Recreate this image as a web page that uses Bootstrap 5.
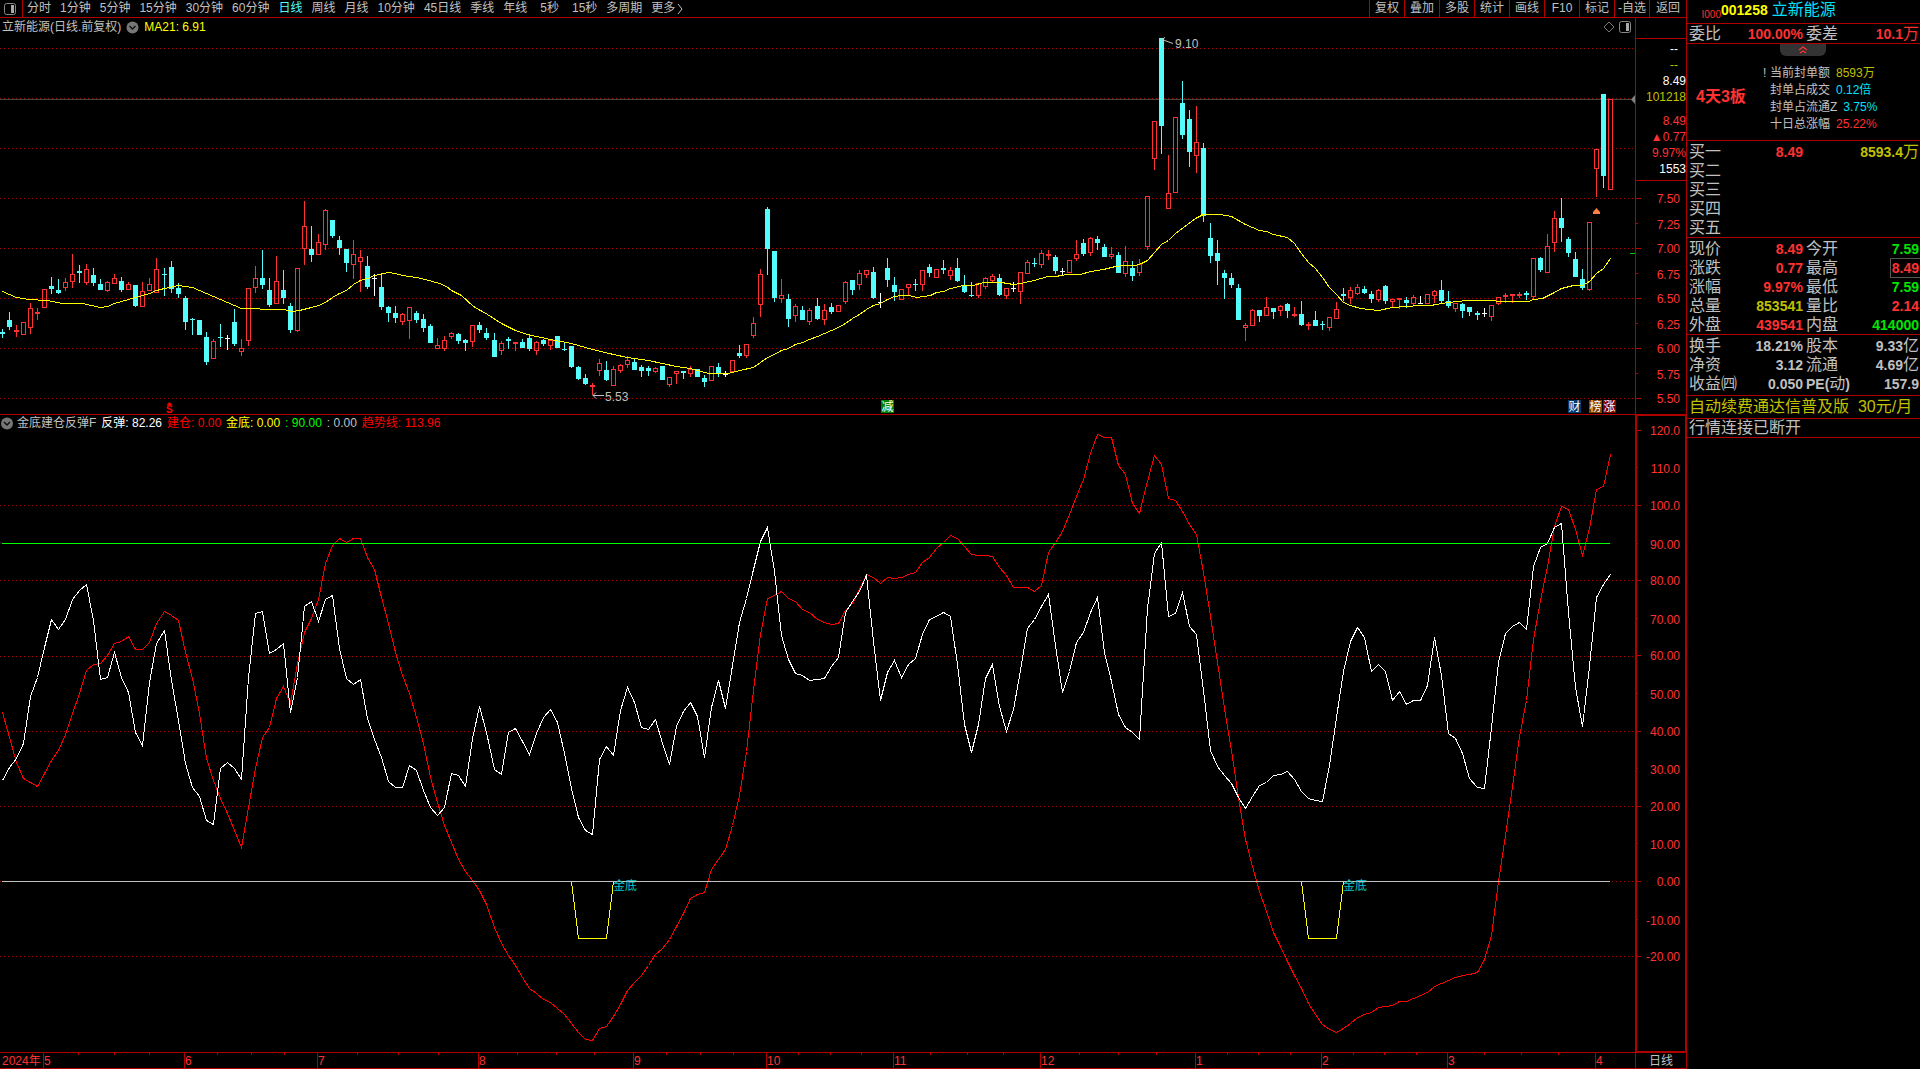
<!DOCTYPE html>
<html lang="zh-CN">
<head>
<meta charset="utf-8">
<meta name="viewport" content="width=device-width, initial-scale=1">
<title>立新能源 001258 日线</title>
<link href="https://cdn.jsdelivr.net/npm/bootstrap@5.3.0/dist/css/bootstrap.min.css" rel="stylesheet">
<style>
:root{--line:#b00000;--up:#ff3232;--dn:#54fcfc;--txt:#c0c0c0;--gold:#c0c000;--grn:#00e600;--cy:#00e1ff}
body{background:#000;color:var(--txt);font-family:"Liberation Sans","Noto Sans CJK SC",sans-serif;font-size:12px;line-height:16px}
button{background:none;border:0;padding:0;color:inherit;font:inherit;line-height:inherit}
svg{display:block}
svg text{font-size:12px}
.ln-b{border-bottom:1px solid var(--line)}
.ln-t{border-top:1px solid var(--line)}
.ln-l{border-left:1px solid var(--line)}
.ln-r{border-right:1px solid var(--line)}
.topbar{height:18px;line-height:15px}
.periods{gap:9px}
.layout-btn{width:23px;padding-left:4px;margin-right:-5px}
.wide-btn{padding:0 4px}
.tool{width:35px;height:17px;text-align:center}
.tool:last-child{width:37px}
.is-on{color:var(--dn)}
.c-up{color:var(--up)}.c-gold{color:var(--gold)}.c-grn{color:var(--grn)}.c-cy{color:var(--cy)}
.c-yel{color:#ff0}.c-red{color:#f00}.c-lime{color:#0f0}.c-wht{color:#fff}
.price-pane{height:397px}
.pane-title{height:18px;line-height:18px;padding-left:2px}
.pane-title button{margin:0 5px}
.ind-title{height:17px;line-height:17px;gap:5px;padding-left:1px}
.ind-title button{margin-right:-1px}
.scale{width:51px}
.quick{height:143px;padding-top:2px;text-align:right;line-height:16px}
.scale-head{height:20px}
.ind-scale{border:1px solid var(--line);border-left-width:2px}
.timeline{height:17px}
.months{min-width:0}
.side{width:234px}
.stock-head{height:23px;line-height:20px}
.stock-head .flag{font-size:10px;width:34px;text-align:right;padding-top:5px}
.stock-head strong{font-size:14px}
.name,.quotes,.notice{font-size:16px}
.quotes{width:100%;table-layout:fixed;border-collapse:separate;border-spacing:0;line-height:18px}
.quotes td,.quotes th{padding:0 1px 0 2px;height:19px;font-weight:400;white-space:nowrap;vertical-align:middle}
.quotes td{text-align:right}
.quotes b{font-size:14px;line-height:14px}
.w-a{width:50px}.w-b{width:67px}.w-c{width:45px}
.seal{height:97px}
.seal dl{line-height:17px;padding-top:14px}
.seal dt,.seal dd{font-weight:400;margin:0}
.seal dd{margin-left:6px}
.bang{width:9px;padding-left:2px}
.streak{width:74px;padding-left:9px;font-size:16px;font-weight:700;white-space:nowrap;padding-top:10px}
.fold{position:absolute;left:93px;top:0;width:46px;height:12px;background:#333;border-radius:0 0 6px 6px}
.boxed{outline:1px solid #555;outline-offset:1px}
.notice{line-height:18px;padding-left:2px;white-space:pre}
.notice-ad{line-height:22px}
</style>
<script src="https://cdn.jsdelivr.net/npm/bootstrap@5.3.0/dist/js/bootstrap.bundle.min.js"></script>
<style>
.q-pad{padding-top:1px}
.q-end{padding-bottom:2px}
</style>
</head>
<body class="vh-100 overflow-hidden">
<div class="d-flex h-100">
<main class="d-flex flex-column flex-grow-1 overflow-hidden">
  <header class="topbar d-flex justify-content-between ln-b">
    <nav class="periods d-flex text-nowrap" aria-label="周期">
      <button class="layout-btn ln-r" aria-label="布局"><svg width="13" height="12"><rect x=".5" y=".5" width="11" height="11" rx="2" fill="none" stroke="#888"/><rect x="7" y="2" width="3" height="8" fill="#aaa"/></svg></button>
      <button>分时</button><button>1分钟</button><button>5分钟</button><button>15分钟</button><button>30分钟</button><button>60分钟</button><button class="is-on">日线</button><button>周线</button><button>月线</button><button>10分钟</button><button>45日线</button><button>季线</button><button>年线</button><button class="wide-btn">5秒</button><button>15秒</button><button>多周期</button><button class="d-flex align-items-center">更多<svg width="10" height="14"><path d="M3 2l4 5-4 5" fill="none" stroke="#c0c0c0"/></svg></button>
    </nav>
    <div class="d-flex text-nowrap">
      <button class="tool ln-l">复权</button><button class="tool ln-l">叠加</button><button class="tool ln-l">多股</button><button class="tool ln-l">统计</button><button class="tool ln-l">画线</button><button class="tool ln-l">F10</button><button class="tool ln-l">标记</button><button class="tool ln-l">-自选</button><button class="tool ln-l">返回</button>
    </div>
  </header>

  <section class="price-pane d-flex ln-b">
    <div class="d-flex flex-column flex-grow-1 overflow-hidden">
      <div class="pane-title d-flex align-items-center">
        <span>立新能源(日线.前复权)</span>
        <button aria-label="展开"><svg width="13" height="13"><circle cx="6.5" cy="6.5" r="6" fill="#777"/><path d="M3.500 5l3 3 3-3" fill="none" stroke="#111" stroke-width="1.5"/></svg></button>
        <span class="c-yel">MA21: 6.91</span>
        <span class="ms-auto d-flex align-items-center gap-1 pe-1">
          <svg width="12" height="12"><path d="M6 1l5 5-5 5-5-5z" fill="none" stroke="#777"/></svg>
          <svg width="12" height="12"><rect x=".5" y=".5" width="11" height="11" rx="2" fill="none" stroke="#888"/><rect x="7" y="2" width="3" height="8" fill="#aaa"/></svg>
        </span>
      </div>
      <svg id="price" class="flex-grow-1 w-100" role="img" aria-label="日K线"></svg>
    </div>
    <div class="scale ln-l d-flex flex-column">
      <div class="scale-head"></div>
      <div class="quick ln-t ln-b">
        <div class="c-wht pe-2">--</div><div class="c-gold pe-2">--</div><div class="c-wht">8.49</div><div class="c-gold">101218</div>
        <div class="c-up pt-2">8.49</div><div class="c-up">▲0.77</div><div class="c-up">9.97%</div><div class="c-wht">1553</div>
      </div>
      <svg id="priceScale" class="flex-grow-1 w-100"></svg>
    </div>
  </section>

  <section class="d-flex flex-grow-1 overflow-hidden">
    <div class="d-flex flex-column flex-grow-1 overflow-hidden">
      <div class="ind-title d-flex align-items-center text-nowrap">
        <button aria-label="展开指标"><svg width="12" height="13"><circle cx="6" cy="6.5" r="6" fill="#777"/><path d="M3 5l3 3 3-3" fill="none" stroke="#111" stroke-width="1.5"/></svg></button>
        <span>金底建仓反弹F</span><span class="c-wht">反弹: 82.26</span><span class="c-red">建仓: 0.00</span><span class="c-yel">金底: 0.00</span><span class="c-lime">: 90.00</span><span>: 0.00</span><span class="c-red">趋势线: 113.96</span>
      </div>
      <svg id="ind" class="flex-grow-1 w-100" role="img" aria-label="金底建仓反弹指标"></svg>
    </div>
    <div class="scale ind-scale d-flex"><svg id="indScale" class="w-100 h-100"></svg></div>
  </section>

  <footer class="timeline d-flex ln-t ln-b">
    <svg id="months" class="months flex-grow-1 h-100"></svg>
    <button class="scale ln-l">日线</button>
  </footer>
</main>

<aside class="side ln-l flex-shrink-0">
  <div class="stock-head d-flex">
    <span class="flag c-up">I000</span><strong class="c-yel">001258</strong><span class="name c-cy ms-1">立新能源</span>
  </div>
  <table class="quotes ln-t"><colgroup><col class="w-a"><col class="w-b"><col class="w-c"><col></colgroup>
    <tr><th>委比</th><td class="c-up"><b>100.00%</b></td><th>委差</th><td class="c-up"><b>10.1</b>万</td></tr>
  </table>
  <div class="seal ln-t position-relative d-flex align-items-center">
    <button class="fold" aria-label="收起"><svg width="46" height="11"><path d="M19 5l4-3 4 3M20 8l3-2 3 2" fill="none" stroke="#ff3232" stroke-width="1.2"/></svg></button>
    <div class="streak c-up">4天3板</div>
    <dl class="mb-0">
      <div class="d-flex"><span class="bang">!</span><dt>当前封单额</dt><dd class="c-gold">8593万</dd></div>
      <div class="d-flex"><span class="bang"></span><dt>封单占成交</dt><dd class="c-cy">0.12倍</dd></div>
      <div class="d-flex"><span class="bang"></span><dt>封单占流通Z</dt><dd class="c-cy">3.75%</dd></div>
      <div class="d-flex"><span class="bang"></span><dt>十日总涨幅</dt><dd class="c-up">25.22%</dd></div>
    </dl>
  </div>
  <table class="quotes q-pad ln-t"><colgroup><col class="w-a"><col class="w-b"><col class="w-c"><col></colgroup>
    <tr><th>买一</th><td class="c-up"><b>8.49</b></td><th></th><td class="c-gold"><b>8593.4</b>万</td></tr>
    <tr><th>买二</th><td></td><th></th><td></td></tr>
    <tr><th>买三</th><td></td><th></th><td></td></tr>
    <tr><th>买四</th><td></td><th></th><td></td></tr>
    <tr><th>买五</th><td></td><th></th><td></td></tr>
  </table>
  <table class="quotes q-pad ln-t"><colgroup><col class="w-a"><col class="w-b"><col class="w-c"><col></colgroup>
    <tr><th>现价</th><td class="c-up"><b>8.49</b></td><th>今开</th><td class="c-grn"><b>7.59</b></td></tr>
    <tr><th>涨跌</th><td class="c-up"><b>0.77</b></td><th>最高</th><td class="c-up"><b class="boxed">8.49</b></td></tr>
    <tr><th>涨幅</th><td class="c-up"><b>9.97%</b></td><th>最低</th><td class="c-grn"><b>7.59</b></td></tr>
    <tr><th>总量</th><td class="c-gold"><b>853541</b></td><th>量比</th><td class="c-up"><b>2.14</b></td></tr>
    <tr><th>外盘</th><td class="c-up"><b>439541</b></td><th>内盘</th><td class="c-grn"><b>414000</b></td></tr>
  </table>
  <table class="quotes q-pad q-end ln-t"><colgroup><col class="w-a"><col class="w-b"><col class="w-c"><col></colgroup>
    <tr><th>换手</th><td><b>18.21%</b></td><th>股本</th><td><b>9.33</b>亿</td></tr>
    <tr><th>净资</th><td><b>3.12</b></td><th>流通</th><td><b>4.69</b>亿</td></tr>
    <tr><th>收益㈣</th><td><b>0.050</b></td><th><b>PE(</b>动<b>)</b></th><td><b>157.9</b></td></tr>
  </table>
  <div class="notice notice-ad ln-t c-gold">自动续费通达信普及版  30元/月</div>
  <div class="notice ln-t ln-b">行情连接已断开</div>
</aside>
</div>

<script>
// Daily bars: colour key, high, body top, body bottom, low, in cents
const bars=`c619,616,615,611 c636,628,622,619 r623,618,617,612 r626,626,614,614 r645,640,621,615 r640,636,635,629 r659,659,641,641 c671,662,660,655 c669,658,656,655 r670,666,661,658
r694,674,667,661 c683,677,676,666 r684,679,666,664 c680,673,666,663 c669,664,659,659 r667,666,658,657 r674,670,665,665 c671,667,659,657 r666,664,659,659 c663,663,643,642
r666,657,642,642 r670,664,658,658 r690,679,656,656 c680,674,674,653 c687,681,660,656 c665,660,655,651 c652,650,627,619 c630,629,629,614 c628,628,614,614 c616,611,587,584
r609,607,590,590 c624,611,611,602 w613,610,610,599 c639,626,605,603 r609,600,597,593 r660,660,608,603 r682,670,661,656 c698,670,664,660 c670,658,644,642 r692,667,645,645
c678,658,651,645 c645,642,619,616 r680,680,618,617 r747,722,700,684 c722,699,694,687 r714,706,694,694 r739,738,704,699 c728,728,713,711 c712,708,701,694 c699,699,686,677
r708,694,684,670 r698,691,687,657 c692,682,662,660 w674,670,670,653 c674,661,642,639 c642,641,636,627 c642,635,631,626 r635,634,627,624 r641,641,628,610 c637,635,629,626
c634,629,621,617 c624,622,606,606 r610,603,600,600 r612,608,600,598 r616,615,612,610 c615,614,608,605 c609,608,606,598 r623,623,607,602 c626,623,619,616 c620,615,611,609
c615,608,592,592 r607,605,598,594 c611,609,608,600 r606,606,605,598 c609,606,601,601 c613,610,600,598 r607,606,598,594 c609,608,605,603 r609,608,603,599 c612,612,601,601
c605,599,599,598 c602,602,582,581 c582,581,570,569 c574,570,565,564 r565,563,562,554 r589,585,578,573 c587,578,569,568 r582,579,563,563 r584,583,578,576 r592,588,584,581
c589,586,579,579 c583,581,578,572 c582,580,578,573 r581,580,577,576 c582,582,569,569 r571,571,564,562 r577,577,575,565 c577,577,576,570 r582,579,575,572 c579,579,572,572
c573,570,567,562 r582,582,568,568 c585,581,575,572 w577,574,574,572 r588,588,577,577 c603,595,593,591 r604,604,593,591 r631,625,613,611 r679,674,644,632 c741,739,700,674
c697,697,651,647 r669,653,650,646 c654,649,630,622 r644,642,633,627 c642,638,629,629 r640,638,627,624 c650,642,630,629 r644,638,629,624 c645,641,637,635 r643,643,637,637
r667,666,647,645 c668,668,659,654 r678,675,664,659 r678,678,674,671 c681,676,651,650 w655,646,646,641 c690,680,669,662 c671,663,657,648 r659,659,649,649 r664,664,661,653
c669,664,664,658 r678,678,664,658 c684,681,676,672 r679,679,671,671 c688,680,679,675 r681,678,673,669 c690,680,668,667 c673,663,657,656 c666,653,653,652 r665,665,653,651
r671,670,662,660 r674,672,668,667 c674,670,654,653 r660,660,653,650 w666,660,660,657 r676,676,657,645 r688,686,675,675 c690,685,685,682 r698,695,684,681 r698,694,693,689
c693,691,678,675 w680,677,677,674 r688,688,676,676 r708,694,690,688 c709,705,695,693 r711,710,696,693 c712,709,706,699 c704,701,692,692 r701,694,692,690 c696,693,676,676
r702,687,675,672 c687,680,673,668 r689,684,676,673 r752,752,702,699 r827,827,790,779 c910,910,823,795 r793,755,740,740 r831,831,756,756 c867,845,814,810 c838,829,797,782
r842,806,793,776 c805,800,733,727 c725,710,693,686 c708,695,688,664 c678,675,671,650 c675,670,664,661 c664,660,629,629 r625,623,621,608 r639,638,623,623 c638,638,633,627
r651,641,633,633 c640,640,637,630 r643,642,638,633 c645,644,638,631 r641,634,633,632 c647,634,624,623 r626,624,623,619 c637,628,623,623 c627,624,624,619 r631,631,621,618
r646,639,630,630 c660,654,653,648 r661,658,651,645 r664,661,655,654 c662,659,656,655 c657,654,650,646 r659,658,649,647 c663,662,648,645 r649,649,647,642 r650,650,649,640
c651,648,646,641 r653,651,645,644 w652,645,645,645 r654,654,645,645 r658,657,653,646 c668,658,648,646 c657,647,643,641 r645,645,640,637 c645,644,638,631 c641,641,637,633
c637,635,634,629 w640,635,635,632 r643,643,632,628 r651,651,645,644 r655,653,652,646 r654,654,653,646 r656,654,653,651 c657,655,654,649 r690,690,652,650 c691,690,679,677
r714,702,676,676 r737,730,706,697 c750,730,721,707 c711,709,696,692 c696,689,672,672 c679,669,661,659 r726,726,659,658 r799,799,780,752 c854,854,773,761 r849,849,759,759`.split(/\s+/);
const ma='2,291 9,294 16,297 28,299 47,300 62,303 82,303 100,307 107,306 114,303 121,301 135,297 149,293 156,290 164,288 178,285 192,287 206,293 220,299 234,305 241,308 257,308 262,309 283,309 292,311 299,310 311,307 318,305 325,302 332,297 339,293 346,290 353,284 360,280 367,278 374,275 388,272 395,273 402,275 416,277 425,279 439,283 446,286 451,290 461,295 473,306 487,314 501,323 515,330 527,334 550,339 571,343 592,349 613,354 627,357 648,360 676,366 690,368 708,373 728,373 739,370 753,367 760,362 767,357 774,354 781,350 788,348 795,344 802,342 809,339 817,336 824,333 831,330 838,327 845,323 852,318 859,314 866,309 873,305 880,303 887,299 894,296 901,295 909,295 916,297 930,295 936,292 943,291 950,288 963,285 973,285 983,282 1001,282 1013,284 1020,283 1034,280 1047,276 1055,276 1067,274 1080,274 1090,271 1103,269 1115,266 1125,265 1135,265 1141,263 1147,260 1154,252 1161,244 1168,240 1175,233 1187,224 1195,218 1203,214 1220,214 1231,216 1245,224 1259,230 1266,231 1273,234 1287,237 1294,243 1301,253 1308,262 1315,268 1322,277 1329,287 1336,294 1343,302 1350,305 1360,308 1378,310 1392,307 1406,306 1420,305 1430,305 1448,302 1466,300 1493,300 1498,301 1528,301 1533,299 1542,298 1554,292 1561,288 1573,285 1582,285 1589,281 1596,273 1603,268 1610,258';
const rebound=[780,767,758,743,696,677,647,619,629,619,599,590,584,620,679,677,652,677,692,732,745,682,643,630,680,720,763,787,796,820,824,768,762,768,779,677,613,611,653,649,643,712,677,606,601,621,599,595,648,678,684,679,718,739,757,781,787,787,765,770,790,807,815,807,773,775,786,738,706,732,769,774,732,728,741,754,733,717,709,722,753,788,817,830,834,759,746,755,710,687,702,727,729,719,743,764,726,711,702,716,757,707,680,708,665,622,598,569,541,527,571,635,659,673,675,680,679,678,666,657,612,601,591,575,641,700,672,660,677,664,658,634,619,616,612,616,664,724,752,724,678,664,706,731,709,670,628,619,606,594,645,692,671,642,632,612,597,652,681,714,727,732,739,608,553,542,616,613,592,626,634,690,750,766,775,783,797,808,796,785,782,775,774,771,779,791,798,800,801,765,717,671,641,627,637,671,664,671,700,691,704,700,700,685,637,675,733,738,753,778,787,788,727,662,633,626,622,629,566,547,543,527,523,612,687,726,666,597,584,574];
const trend=[712,737,762,778,782,786,773,760,750,734,713,693,670,664,663,655,643,641,636,649,649,642,623,611,615,620,652,678,713,758,780,798,813,830,847,807,768,737,727,698,686,703,663,632,618,599,563,545,538,542,538,538,557,569,597,623,652,675,693,717,743,777,802,825,842,859,871,880,890,904,927,943,955,965,977,988,993,999,1002,1008,1014,1023,1032,1039,1040,1028,1026,1016,1004,990,982,975,965,954,948,939,926,913,898,894,892,869,859,849,825,795,751,690,634,598,595,591,598,601,609,612,619,622,624,623,610,603,589,574,577,583,577,578,577,574,572,562,557,548,542,535,538,546,554,555,555,556,567,575,587,587,587,591,585,552,542,531,514,496,479,453,434,437,437,465,474,503,513,481,455,464,498,500,511,524,534,572,616,662,708,750,797,839,866,891,911,932,946,961,975,988,1003,1014,1024,1029,1032,1028,1023,1017,1014,1012,1007,1006,1005,1001,1001,998,995,992,986,983,980,977,975,974,972,959,935,881,835,786,736,700,639,600,566,526,506,509,529,555,528,489,486,454];
const RED='#ff3232',CY='#54fcfc',LN='#b00000';
const px=i=>2+7*i+Math.floor((i+24)/46.65);
const box=(x,y,w,h,c)=>`<rect x="${x}" y="${y}" width="${w}" height="${h}" fill="${c}"/>`;
const dots=y=>`<line x1="0" x2="100%" y1="${y+.5}" y2="${y+.5}" stroke="${LN}" stroke-dasharray="1 3"/>`;
const label=(x,y,t,c,a='start')=>`<text x="${x}" y="${y+4}" fill="${c}" text-anchor="${a}">${t}</text>`;
const line=(pts,c)=>`<polyline points="${pts}" fill="none" stroke="${c}" shape-rendering="crispEdges"/>`;
const put=(id,top,s)=>{document.getElementById(id).innerHTML=`<g transform="translate(0,${-top})">${s}</g>`};
const shift=s=>s.split(' ').map(p=>p.split(',').map(n=>+n+.5).join()).join(' ');

// price pane
let s='';
for(let y=48;y<400;y+=50)s+=dots(y);
s+=`<rect x="0" y="99" width="100%" height="1" fill="#444"/>`;
bars.forEach((b,i)=>{
  const k=b[0],[h,t,o,l]=b.slice(1).split(',').map(v=>948-v),x=px(i),c={r:RED,c:CY,w:'#fff'}[k];
  s+=box(x,h,1,t-h,c)+box(x,o+1,1,l-o,c);
  s+=k==='r'&&o-t>1?`<rect x="${x-1.5}" y="${t+.5}" width="4" height="${o-t}" fill="none" stroke="${c}"/>`:box(x-2,t,5,o-t+1,c);
});
s+=line(shift(ma),'#ff0');
s+=`<path d="M1173 43.5L1162 39.5M1165 37.5L1162 39.5L1164 43M604 395.5H593M596 392.5L593 395.5L596 398.5" fill="none" stroke="#c0c0c0"/>`;
s+=label(1175,44,'9.10','#c0c0c0')+label(605,397,'5.53','#c0c0c0');
[[881,'减','#008000'],[1568,'财','#003a70'],[1589,'榜','#804000'],[1603,'涨','#800000']].forEach(([x,t,c])=>s+=box(x,400,13,13,c)+`<text x="${x+.5}" y="411" fill="#fff">${t}</text>`);
s+=`<path d="M166.500 405L169.500 402L172.500 405z" fill="#f00"/><text x="166" y="413" fill="#f00" font-weight="700" style="font-size:10px">S</text>`;
s+=`<path d="M1593 214v-2l3.500-4 3.500 4v2z" fill="#ff8040"/>`+box(1630,253,5,1,'#00c800')+`<path d="M1635 95v9l-4-4.500z" fill="#808080"/>`;
put('price',36,s);

// price scale
s='';
for(let v=750,n=0;v>=550;v-=25,n++){const y=948-v;s+=box(0,y,n%2?2:5,1,LN)+label(44,y+(n%2?2:1),(v/100).toFixed(2),RED,'end')}
put('priceScale',181,s);

// indicator pane
s='';
[505,580,656,731,806,881,956].forEach(y=>s+=dots(y));
const yel='571,881 578,938 606,938 613,881',yel2='1301,881 1308,938 1336,938 1343,881';
s+=line(trend.map((y,i)=>px(i)+.5+','+(y+.5)).join(' '),'#f00')+line(rebound.map((y,i)=>px(i)+.5+','+(y+.5)).join(' '),'#fff');
s+=box(2,543,1608,1,'#0f0')+line(shift(yel),'#ff0')+line(shift(yel2),'#ff0')+box(2,881,1608,1,'#c0c0c0');
s+=label(613,886,'金底','#00c8c8')+label(1343,886,'金底','#00c8c8');
put('ind',432,s);

// indicator scale
s='';
for(let v=120;v>=-20;v-=10){const odd=(v/10)%2,y=Math.round(881-v*3.76);s+=box(0,y,odd?1:4,1,LN)+label(43,y+(odd?2:1),v>=100?v.toFixed(1):v.toFixed(2),RED,'end')}
put('indScale',416,s);

// month axis
s='';
[[43,5],[184,6],[317,7],[478,8],[633,9],[766,10],[893,11],[1040,12],[1195,1],[1321,2],[1447,3],[1595,4]].forEach(([x,m])=>s+=box(x,0,1,15,LN)+label(x+1,8,m,RED));
[78,114,149,217,251,284,357,398,438,517,556,594,666,700,733,798,830,861,930,967,1003,1079,1118,1156,1227,1258,1290,1353,1384,1416,1484,1521,1558].forEach(x=>s+=box(x,0,1,2,LN));
s+=label(2,8,'2024年',RED);
put('months',0,s);
</script>
</body>
</html>
